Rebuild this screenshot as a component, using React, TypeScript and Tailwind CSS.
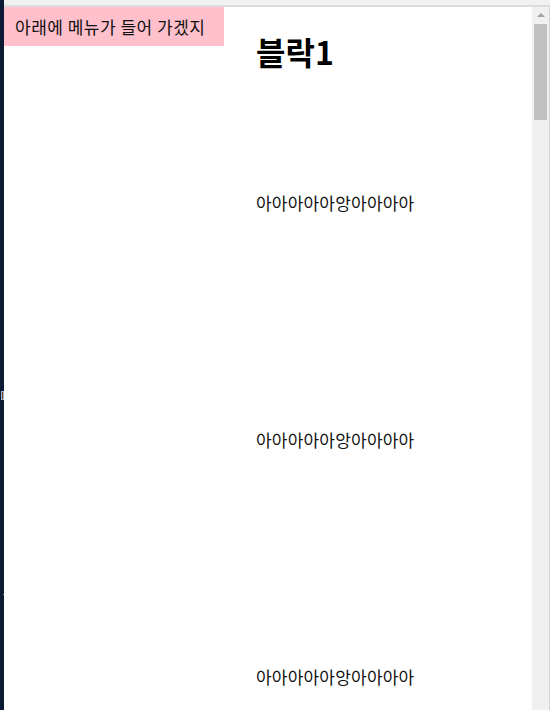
const font = { fontFamily: '"Noto Sans CJK KR", "Noto Sans", sans-serif' };

const lines = ["아아아아아앙아아아아", "아아아아아앙아아아아", "아아아아아앙아아아아"];

export default function App() {
  return (
    <div className="flex h-[710px] w-[550px] overflow-hidden bg-white" style={font}>
      {/* dark desktop edge */}
      <div className="relative w-[4px] shrink-0 bg-[#0b1b33]">
        <div className="absolute left-[1px] top-[391px] h-[9px] w-[3px] border border-[#9bb8d8] bg-[#7a3b12]" />
        <div className="absolute left-[3px] top-[594px] h-[1px] w-[1px] bg-[#8a96a8]" />
      </div>

      <div className="flex min-w-0 flex-1 flex-col">
        <div className="h-[5px] shrink-0 bg-[#f1f1f1]" />
        <div className="h-[2px] shrink-0 bg-[#dcdcdc]" />

        <div className="flex min-h-0 flex-1">
          <div className="flex min-w-0 flex-1 bg-white">
            <aside className="w-[220px] shrink-0">
              <div className="flex h-[39px] items-center bg-[#ffc0cb] pl-[11px] text-[17px] tracking-[0.5px] text-[#111]">
                아래에 메뉴가 들어 가겠지
              </div>
            </aside>

            <main className="flex flex-col pl-[32px]">
              <h1 className="mt-[24px] text-[32px] font-bold leading-[40px] text-black">블락1</h1>
              <p className="mt-[120px] text-[17px] leading-[24px] tracking-[0.2px] text-[#111]">{lines[0]}</p>
              <p className="mt-[213px] text-[17px] leading-[24px] tracking-[0.2px] text-[#111]">{lines[1]}</p>
              <p className="mt-[213px] text-[17px] leading-[24px] tracking-[0.2px] text-[#111]">{lines[2]}</p>
            </main>
          </div>

          {/* scrollbar */}
          <div className="flex w-[17px] shrink-0 flex-col items-center bg-[#f0f0f0]">
            <div className="mt-[6px] h-0 w-0 border-x-[4px] border-b-[4px] border-x-transparent border-b-[#a3a3a3]" />
            <div className="mt-[7px] h-[96px] w-[13px] bg-[#c1c1c1]" />
          </div>
          <div className="w-[1px] shrink-0 bg-[#d6d6d6]" />
        </div>
      </div>
    </div>
  );
}
